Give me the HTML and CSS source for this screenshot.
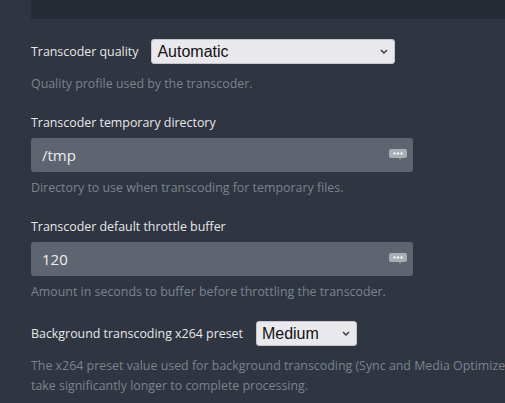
FILE: index.html
```html
<!DOCTYPE html>
<html lang="en">
<head>
  <meta charset="UTF-8">
  <meta name="viewport" content="width=device-width, initial-scale=1.0">
  <title>Transcoder</title>
  <link rel="stylesheet" href="styles.css">
</head>
<body>
  <div class="settings">
    <div class="top-panel"></div>

    <div class="form-group">
      <div class="select-row">
        <label class="label" for="quality">Transcoder quality</label>
        <div class="select-wrap select-wide">
          <select id="quality" class="select">
            <option>Automatic</option>
          </select>
          <svg class="chevron" width="8" height="5" viewBox="0 0 8 5"><path d="M1 1l3 3 3-3" fill="none" stroke="#333" stroke-width="1.4"/></svg>
        </div>
      </div>
      <p class="help help-select">Quality profile used by the transcoder.</p>
    </div>

    <div class="form-group">
      <label class="label" for="tmpdir">Transcoder temporary directory</label>
      <div class="input-wrap">
        <input id="tmpdir" class="text-input" type="text" value="/tmp">
        <svg class="more-icon" width="18" height="11" viewBox="0 0 18 11"><path d="M2 0h14a2 2 0 0 1 2 2v5a2 2 0 0 1-2 2h-4l-1 2-1-2H2a2 2 0 0 1-2-2V2a2 2 0 0 1 2-2z" fill="#a9adb4"/><circle cx="5.5" cy="4.5" r="1.2" fill="#f4f4f4"/><circle cx="9" cy="4.5" r="1.2" fill="#f4f4f4"/><circle cx="12.5" cy="4.5" r="1.2" fill="#f4f4f4"/></svg>
      </div>
      <p class="help">Directory to use when transcoding for temporary files.</p>
    </div>

    <div class="form-group">
      <label class="label" for="throttle">Transcoder default throttle buffer</label>
      <div class="input-wrap">
        <input id="throttle" class="text-input" type="text" value="120">
        <svg class="more-icon" width="18" height="11" viewBox="0 0 18 11"><path d="M2 0h14a2 2 0 0 1 2 2v5a2 2 0 0 1-2 2h-4l-1 2-1-2H2a2 2 0 0 1-2-2V2a2 2 0 0 1 2-2z" fill="#a9adb4"/><circle cx="5.5" cy="4.5" r="1.2" fill="#f4f4f4"/><circle cx="9" cy="4.5" r="1.2" fill="#f4f4f4"/><circle cx="12.5" cy="4.5" r="1.2" fill="#f4f4f4"/></svg>
      </div>
      <p class="help">Amount in seconds to buffer before throttling the transcoder.</p>
    </div>

    <div class="form-group">
      <div class="select-row">
        <label class="label" for="preset">Background transcoding x264 preset</label>
        <div class="select-wrap select-small">
          <select id="preset" class="select">
            <option>Medium</option>
          </select>
          <svg class="chevron" width="8" height="5" viewBox="0 0 8 5"><path d="M1 1l3 3 3-3" fill="none" stroke="#333" stroke-width="1.4"/></svg>
        </div>
      </div>
      <p class="help help-select">The x264 preset value used for background transcoding (Sync and Media Optimizer). Slower values will result in better video quality and smaller file sizes, but<br>take significantly longer to complete processing.</p>
    </div>
  </div>
</body>
</html>
```

FILE: styles.css
```css
body {
  margin: 0;
  padding: 0;
  background-color: #2f3541;
  font-family: "Open Sans", "Noto Sans", sans-serif;
  color: #eeeeee;
  overflow: hidden;
}

.settings {
  padding-left: 31px;
}

.top-panel {
  height: 19px;
  background-color: #262b35;
  margin-bottom: 20px;
}

.form-group {
  margin-bottom: 19px;
}

.label {
  display: block;
  font-size: 12.4px;
  line-height: 20px;
  color: #e8e8e8;
}

.select-row {
  display: flex;
  align-items: center;
  gap: 13px;
}

.select-wrap {
  position: relative;
}

.select-wide {
  width: 244px;
}

.select-small {
  width: 101px;
}

.select {
  appearance: none;
  width: 100%;
  height: 25px;
  margin: 0;
  padding: 0 20px 0 5px;
  border: 1px solid #c5c5cc;
  border-radius: 3px;
  background-color: #e9e9ed;
  color: #111;
  font-family: "Liberation Sans", Arial, sans-serif;
  font-size: 16px;
  outline: none;
}

.chevron {
  position: absolute;
  right: 7px;
  top: 10px;
  pointer-events: none;
}

.input-wrap {
  position: relative;
  width: 382px;
  margin-top: 5px;
}

.text-input {
  box-sizing: border-box;
  width: 100%;
  height: 34px;
  margin: 0;
  padding: 0 11px;
  border: none;
  border-radius: 3px;
  background-color: #5e6570;
  color: #eeeeee;
  font-family: "Open Sans", sans-serif;
  font-size: 15px;
  outline: none;
}

.more-icon {
  position: absolute;
  right: 6px;
  top: 11px;
}

.help {
  margin: 6px 0 0;
  font-size: 12.4px;
  line-height: 20px;
  color: #7d838e;
  white-space: nowrap;
}

.help-select {
  margin-top: 10px;
}
```
